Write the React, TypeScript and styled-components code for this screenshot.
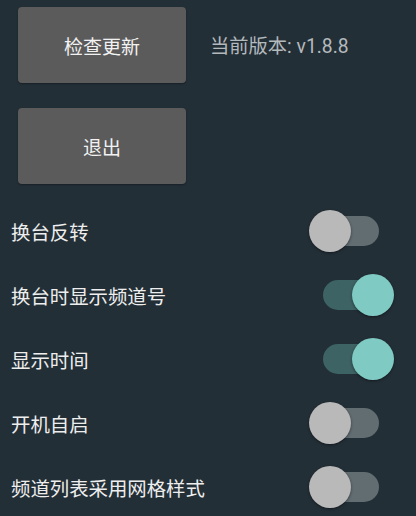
import React, { useState } from "react";
import styled, { createGlobalStyle } from "styled-components";

const Global = createGlobalStyle`
  html, body { margin: 0; padding: 0; background: #232f37; }
  body { font-family: Roboto, "Noto Sans CJK SC", "Noto Sans", sans-serif; }
`;

const Page = styled.div`
  width: 416px;
  height: 516px;
  background: #232f37;
  overflow: hidden;
  display: flex;
  flex-direction: column;
  padding-top: 7px;
  box-sizing: border-box;
`;

const ButtonRow = styled.div`
  display: flex;
  align-items: center;
  gap: 24px;
  padding-left: 18px;
  margin-bottom: 25px;
`;

const ActionButton = styled.button`
  width: 168px;
  height: 76px;
  border: none;
  border-radius: 4px;
  background: #5b5b5b;
  color: #f2f2f2;
  font-family: Roboto, "Noto Sans CJK SC", sans-serif;
  font-size: 19px;
  box-shadow: 0 1px 2px rgba(0, 0, 0, 0.35);
  padding: 0;
  cursor: pointer;
`;

const Version = styled.span`
  color: #b4b9bc;
  font-size: 19.3px;
  font-family: Roboto, "Noto Sans CJK SC", sans-serif;
`;

const List = styled.div`
  display: flex;
  flex-direction: column;
  margin-top: -10px;
`;

const Row = styled.div`
  height: 64px;
  display: flex;
  align-items: center;
  justify-content: space-between;
  padding-left: 11px;
  padding-right: 22px;
`;

const Label = styled.span`
  color: #eeeeee;
  font-size: 19.4px;
  font-family: Roboto, "Noto Sans CJK SC", sans-serif;
`;

const SwitchBox = styled.div`
  position: relative;
  width: 86px;
  height: 44px;
  cursor: pointer;
`;

const Track = styled.div<{ $on: boolean }>`
  position: absolute;
  left: 15px;
  top: 7px;
  width: 56px;
  height: 30px;
  border-radius: 15px;
  background: ${(p) => (p.$on ? "#3e6364" : "#626d71")};
`;

const Thumb = styled.div<{ $on: boolean }>`
  position: absolute;
  top: 1px;
  left: ${(p) => (p.$on ? "44px" : "1px")};
  width: 42px;
  height: 42px;
  border-radius: 50%;
  background: ${(p) => (p.$on ? "#7fcac3" : "#b9b9b9")};
  box-shadow: 0 1px 3px rgba(0, 0, 0, 0.45);
`;

function Switch({ on, onToggle }: { on: boolean; onToggle: () => void }) {
  return (
    <SwitchBox onClick={onToggle}>
      <Track $on={on} />
      <Thumb $on={on} />
    </SwitchBox>
  );
}

const initial = [
  { label: "换台反转", on: false },
  { label: "换台时显示频道号", on: true },
  { label: "显示时间", on: true },
  { label: "开机自启", on: false },
  { label: "频道列表采用网格样式", on: false },
];

export default function App() {
  const [items, setItems] = useState(initial);
  return (
    <Page>
      <Global />
      <ButtonRow>
        <ActionButton>检查更新</ActionButton>
        <Version>当前版本: v1.8.8</Version>
      </ButtonRow>
      <ButtonRow>
        <ActionButton>退出</ActionButton>
      </ButtonRow>
      <List>
        {items.map((it, i) => (
          <Row key={it.label}>
            <Label>{it.label}</Label>
            <Switch
              on={it.on}
              onToggle={() =>
                setItems((s) => s.map((x, j) => (j === i ? { ...x, on: !x.on } : x)))
              }
            />
          </Row>
        ))}
      </List>
    </Page>
  );
}
